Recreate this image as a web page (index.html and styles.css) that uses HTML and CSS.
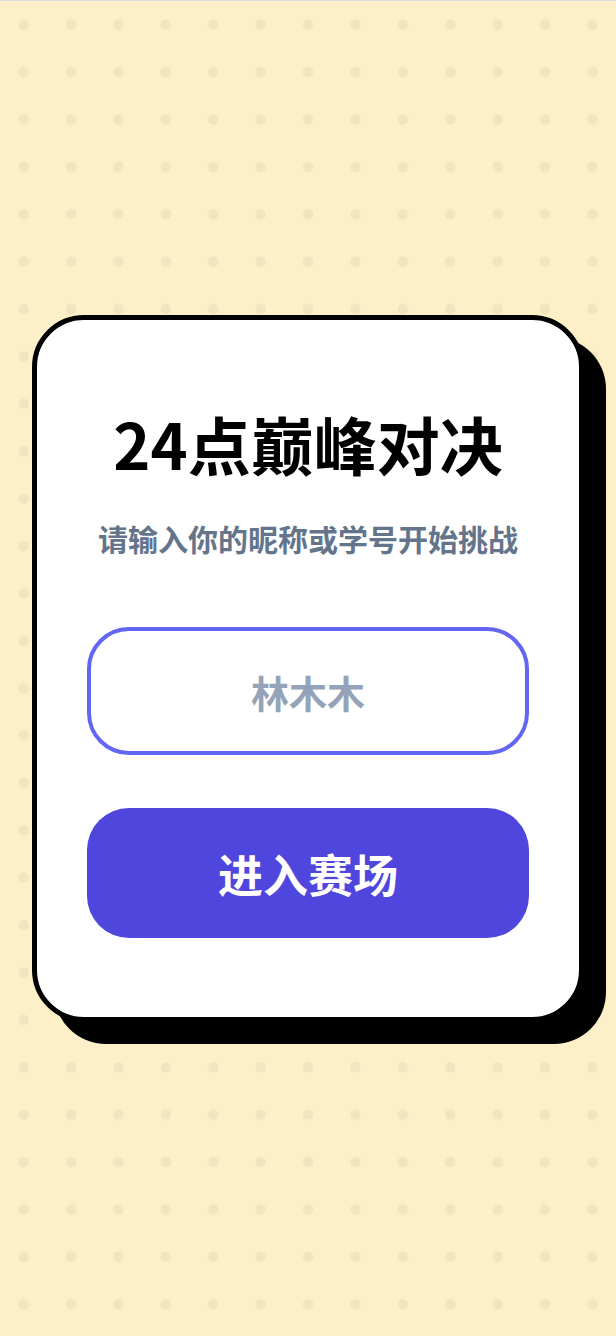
FILE: index.html
```html
<!DOCTYPE html>
<html lang="zh-CN">
<head>
    <meta charset="UTF-8">
    <meta name="viewport" content="width=device-width, initial-scale=1.0">
    <title>24点巅峰对决</title>
    <link rel="stylesheet" href="styles.css">
</head>
<body>
    <div class="page">
        <div class="card">
            <h1 class="title">24点巅峰对决</h1>
            <p class="subtitle">请输入你的昵称或学号开始挑战</p>
            <input class="name" type="text" placeholder="林木木">
            <button class="enter" type="button">进入赛场</button>
        </div>
    </div>
</body>
</html>
```

FILE: styles.css
```css
/* 底色 + 圆点 */
html, body{
    margin: 0;
    padding: 0;
}
body{
    border-top: 1px solid #dcdce2;
    background-color: #fdf0c8;
    background-image: radial-gradient(circle at 23.7px 23.7px, #f1e5bf 0, #f1e5bf 5px, transparent 5.6px);
    background-size: 47.4px 47.4px;
    background-position: 0 1px;
    font-family: "Noto Sans CJK SC", "Noto Sans", sans-serif;
}
.page{
    min-height: 1335px;
    box-sizing: border-box;
    padding: 0 32px;
    display: flex;
    align-items: center;
    justify-content: center;
}
/* 卡片 */
.card{
    width: 552px;
    box-sizing: border-box;
    background: #fff;
    border: 5px solid #000;
    border-radius: 52px;
    box-shadow: 22px 22px 0 #000;
    padding: 84px 50px 79px;
    display: flex;
    flex-direction: column;
    align-items: stretch;
    text-align: center;
}
.title{
    margin: 0;
    font-size: 63px;
    line-height: 78px;
    font-weight: 700;
    color: #000;
}
.subtitle{
    margin: 35px 0 0;
    font-size: 30px;
    line-height: 42px;
    font-weight: 700;
    color: #64748b;
    white-space: nowrap;
}
/* 输入框 */
.name{
    margin-top: 68px;
    height: 128px;
    box-sizing: border-box;
    border: 4px solid #6366f1;
    border-radius: 42px;
    background: #fff;
    outline: none;
    text-align: center;
    font-family: inherit;
    font-size: 38px;
    font-weight: 700;
    color: #1e293b;
}
.name::placeholder{color: #94a3b8;}
/* 按钮 */
.enter{
    margin-top: 53px;
    height: 130px;
    border: none;
    border-radius: 42px;
    background: #4f46dd;
    color: #fff;
    font-family: inherit;
    font-size: 45px;
    font-weight: 700;
    cursor: pointer;
}
```
